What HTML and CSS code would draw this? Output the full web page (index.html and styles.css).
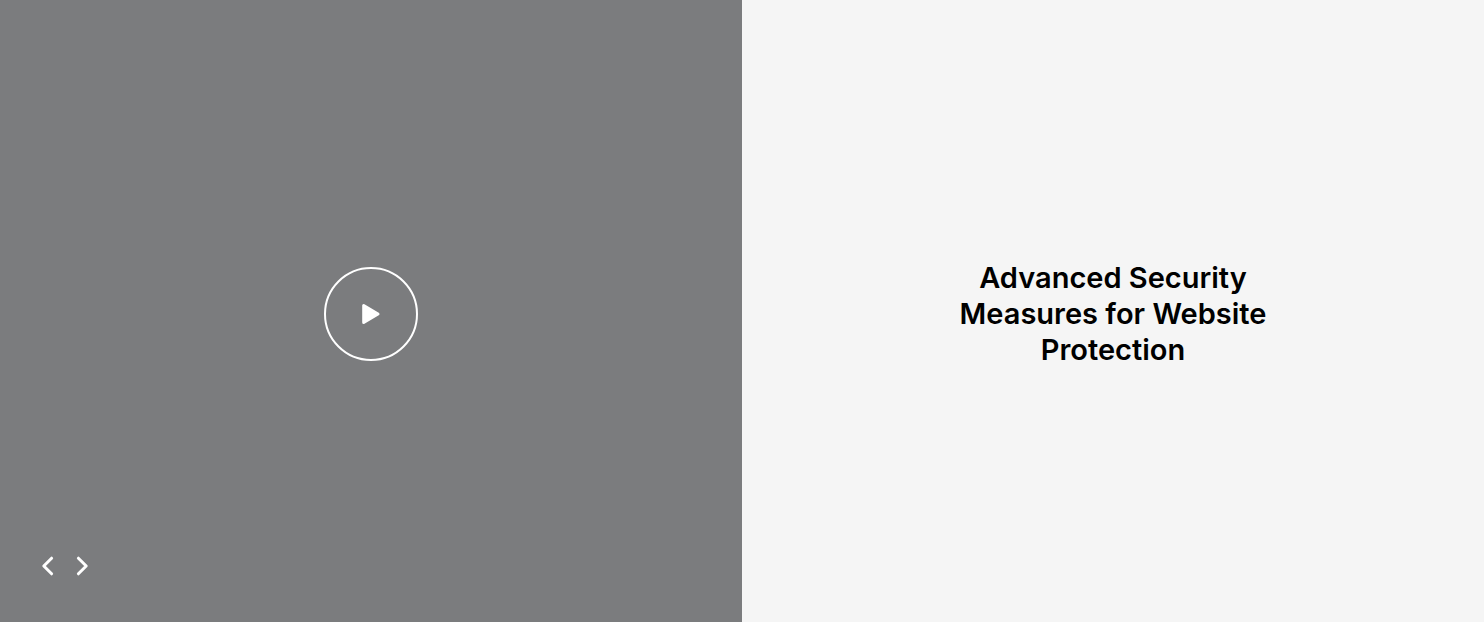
FILE: index.html
```html
<!DOCTYPE html>
<html lang="en">
<head>
<meta charset="utf-8">
<meta name="viewport" content="width=device-width, initial-scale=1">
<title>Advanced Security Measures for Website Protection</title>
<link rel="stylesheet" href="styles.css">
</head>
<body>
<main class="slide">
  <section class="media" aria-label="Video">
    <button class="play" type="button" aria-label="Play video">
      <svg class="play-icon" viewBox="0 0 20 22" aria-hidden="true"><path d="M2.7 2.6V19.4L17 11Z"/></svg>
    </button>
    <nav class="arrows" aria-label="Slides">
      <button class="arrow" type="button" aria-label="Previous slide">
        <svg class="arrow-icon" viewBox="0 0 14 20" aria-hidden="true"><path d="M11.6 2.2L3.8 10L11.6 17.8"/></svg>
      </button>
      <button class="arrow" type="button" aria-label="Next slide">
        <svg class="arrow-icon" viewBox="0 0 14 20" aria-hidden="true"><path d="M2.4 2.2L10.2 10L2.4 17.8"/></svg>
      </button>
    </nav>
  </section>
  <section class="copy">
    <h1 class="title">Advanced Security Measures for Website Protection</h1>
  </section>
</main>
</body>
</html>
```

FILE: styles.css
```css
* { box-sizing: border-box; }
body { margin: 0; font-family: Inter, "Open Sans", sans-serif; }
.slide { display: grid; grid-template-columns: 1fr 1fr; min-height: 100vh; }
.media {
  display: grid;
  grid-template-rows: 1fr auto 1fr;
  padding: 52px 40px 46px;
  background: #7b7c7e;
}
.play {
  grid-row: 2;
  justify-self: center;
  display: flex;
  align-items: center;
  justify-content: center;
  width: 94px;
  height: 94px;
  padding: 0;
  border: 2px solid #fff;
  border-radius: 50%;
  background: transparent;
  cursor: pointer;
}
.play-icon { width: 20px; height: 22px; fill: #fff; stroke: #fff; stroke-width: 3; stroke-linejoin: round; }
.arrows { grid-row: 3; align-self: end; display: flex; gap: 22px; }
.arrow { display: flex; padding: 0; border: 0; background: transparent; cursor: pointer; }
.arrow-icon { width: 14px; height: 20px; fill: none; stroke: #fff; stroke-width: 3; stroke-linecap: round; stroke-linejoin: round; }
.copy { display: flex; align-items: center; justify-content: center; padding: 52px 40px 46px; background: #f5f5f5; }
.title { max-width: 340px; margin: 0; color: #000; font-size: 29px; font-weight: 600; line-height: 36px; text-align: center; }
```
